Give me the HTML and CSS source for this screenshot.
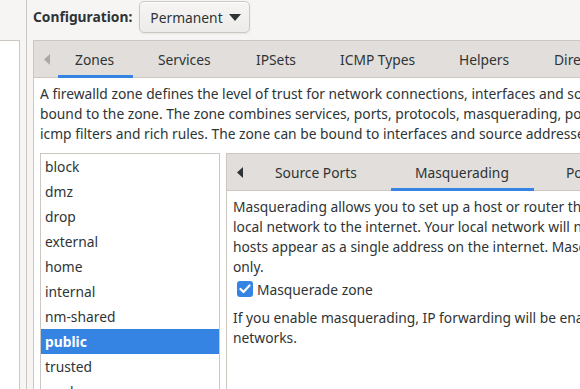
FILE: index.html
```html
<!DOCTYPE html>
<html>
<head>
<meta charset="utf-8">
<link rel="stylesheet" href="styles.css">
</head>
<body>
<div class="app">
  <div class="sidebar">
    <div class="sidebar-top"></div>
    <div class="sidebar-list"></div>
  </div>
  <div class="sep"></div>
  <div class="main">
    <div class="config-row">
      <span class="config-label">Configuration:</span>
      <button class="combo">Permanent <svg class="caret" width="12" height="7" viewBox="0 0 12 7"><path d="M0 0h12L6 7z" fill="#2e3436"/></svg></button>
    </div>
    <div class="notebook">
      <div class="tabs">
        <span class="arrow outer-arrow"><svg width="6" height="11" viewBox="0 0 6 11"><path d="M6 0v11L0 5.5z" fill="#a9a9a7"/></svg></span>
        <span class="tab active t-zones">Zones</span>
        <span class="tab t-services">Services</span>
        <span class="tab t-ipsets">IPSets</span>
        <span class="tab t-icmp">ICMP Types</span>
        <span class="tab t-helpers">Helpers</span>
        <span class="tab t-direct">Direct Configuration</span>
      </div>
      <div class="page">
        <p class="desc">A firewalld zone defines the level of trust for network connections, interfaces and source addresses<br>bound to the zone. The zone combines services, ports, protocols, masquerading, port/packet forwarding,<br>icmp filters and rich rules. The zone can be bound to interfaces and source addresses.</p>
        <div class="zone-area">
          <ul class="zone-list">
            <li>block</li>
            <li>dmz</li>
            <li>drop</li>
            <li>external</li>
            <li>home</li>
            <li>internal</li>
            <li>nm-shared</li>
            <li class="selected">public</li>
            <li>trusted</li>
            <li>work</li>
          </ul>
          <div class="notebook inner">
            <div class="tabs inner-tabs">
              <span class="arrow inner-arrow"><svg width="6" height="11" viewBox="0 0 6 11"><path d="M6 0v11L0 5.5z" fill="#2e3436"/></svg></span>
              <span class="tab t-sports">Source Ports</span>
              <span class="tab active t-masq">Masquerading</span>
              <span class="tab t-ports">Port Forwarding</span>
            </div>
            <div class="page inner-page">
              <p class="desc">Masquerading allows you to set up a host or router that connects your<br>local network to the internet. Your local network will not be visible and the<br>hosts appear as a single address on the internet. Masquerading is IPv4<br>only.</p>
              <label class="check">
                <span class="box"><svg width="12" height="10" viewBox="0 0 12 10"><path d="M1.5 5l3 3 6-6.5" fill="none" stroke="#fff" stroke-width="2.2" stroke-linecap="round" stroke-linejoin="round"/></svg></span>
                Masquerade zone
              </label>
              <p class="desc after">If you enable masquerading, IP forwarding will be enabled for your IPv6<br>networks.</p>
            </div>
          </div>
        </div>
      </div>
    </div>
  </div>
</div>
</body>
</html>
```

FILE: styles.css
```css
* { box-sizing: border-box; }
html, body {
  margin: 0;
  padding: 0;
  width: 580px;
  height: 389px;
  overflow: hidden;
  background: #f6f5f4;
  font-family: "Noto Sans", "Open Sans", sans-serif;
  font-size: 13.8px;
  color: #2e3436;
}
.app {
  display: flex;
  height: 389px;
}
.sidebar {
  width: 20px;
  flex: none;
  display: flex;
  flex-direction: column;
}
.sidebar-top { height: 40px; }
.sidebar-list {
  flex: 1;
  background: #fff;
  border-top: 1px solid #cdc7c2;
  border-right: 1px solid #cdc7c2;
}
.sep {
  width: 7px;
  flex: none;
  border-right: 1px solid #cdc7c2;
  background: #f6f5f4;
}
.main {
  flex: 1;
  min-width: 0;
  padding-left: 6px;
  overflow: hidden;
}
.config-row {
  height: 40px;
  display: flex;
  align-items: flex-start;
  padding-top: 1px;
}
.config-label {
  font-weight: bold;
  line-height: 32px;
  margin-right: 7px;
  white-space: nowrap;
}
.combo {
  font: inherit;
  color: #2e3436;
  height: 32px;
  width: 111px;
  padding: 0 0 0 10px;
  display: flex;
  align-items: center;
  border: 1px solid #cdc7c2;
  border-radius: 5px;
  background: linear-gradient(#f6f5f4, #edebe9);
  box-shadow: inset 0 1px #fff, 0 1px 2px rgba(0,0,0,0.07);
}
.caret { margin-left: 6px; }
.notebook {
  border: 1px solid #cdc7c2;
  border-right: none;
  background: #fff;
  width: 700px;
}
.tabs {
  height: 37px;
  background: #e1dedb;
  border-bottom: 1px solid #cdc7c2;
  display: flex;
  align-items: stretch;
  white-space: nowrap;
}
.arrow {
  display: flex;
  align-items: center;
  flex: none;
}
.outer-arrow { width: 41px; padding-left: 10px; }
.inner-arrow { width: 48px; padding-left: 10px; }
.tab {
  flex: none;
  display: flex;
  align-items: center;
  position: relative;
}
.tab.active::after {
  content: "";
  position: absolute;
  bottom: -1px;
  height: 3px;
  background: #3584e4;
}
.t-zones { width: 83px; }
.t-zones::after { left: -17px; width: 75px; }
.t-services { width: 98px; }
.t-ipsets { width: 84px; }
.t-icmp { width: 119px; }
.t-helpers { width: 95px; }
.t-direct { width: 160px; }
.page { padding: 6px 0 0 6px; }
.desc {
  margin: 0;
  line-height: 20px;
  white-space: nowrap;
}
.zone-area {
  display: flex;
  margin-top: 9px;
  gap: 6px;
}
.zone-list {
  list-style: none;
  margin: 0;
  padding: 0;
  width: 180px;
  flex: none;
  border: 1px solid #cdc7c2;
  height: 260px;
  overflow: hidden;
}
.zone-list li {
  height: 25px;
  line-height: 25px;
  padding-left: 4px;
}
.zone-list li.selected {
  background: #3584e4;
  color: #fff;
  font-weight: bold;
}
.inner {
  width: 400px;
  flex: none;
  height: 260px;
}
.t-sports { width: 140px; }
.t-masq { width: 151px; }
.t-masq::after { left: -24px; width: 143px; }
.t-ports { width: 150px; }
.inner-page { padding: 6px 0 0 6px; }
.check {
  display: flex;
  align-items: center;
  height: 26px;
  padding-left: 4px;
  margin-top: -1px;
}
.box {
  width: 16px;
  height: 16px;
  border-radius: 3px;
  background: #3584e4;
  display: flex;
  align-items: center;
  justify-content: center;
  margin-right: 4px;
}
.desc.after { margin-top: 6px; }
```
